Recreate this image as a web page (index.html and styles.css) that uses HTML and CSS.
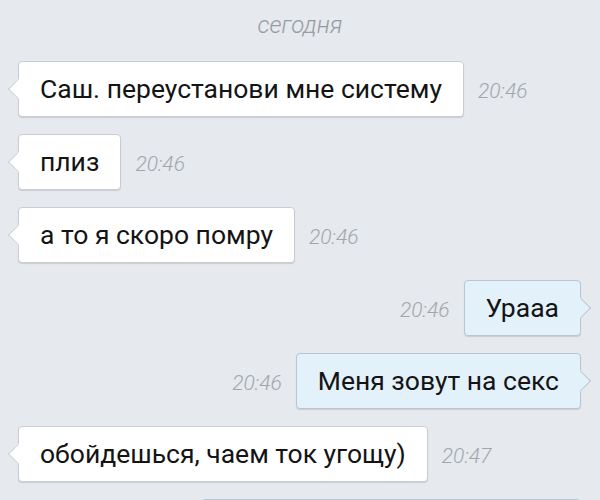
FILE: index.html
```html
<!DOCTYPE html>
<html lang="ru">
<head>
<meta charset="utf-8">
<link rel="stylesheet" href="styles.css">
</head>
<body>
<div class="chat">
  <div class="day">сегодня</div>
  <div class="row in"><div class="bubble">Саш. переустанови мне систему</div><span class="time">20:46</span></div>
  <div class="row in"><div class="bubble">плиз</div><span class="time">20:46</span></div>
  <div class="row in"><div class="bubble">а то я скоро помру</div><span class="time">20:46</span></div>
  <div class="row out"><span class="time">20:46</span><div class="bubble">Урааа</div></div>
  <div class="row out"><span class="time">20:46</span><div class="bubble">Меня зовут на секс</div></div>
  <div class="row in"><div class="bubble">обойдешься, чаем ток угощу)</div><span class="time">20:47</span></div>
  <div class="row out"><div class="bubble wide">&nbsp;</div></div>
</div>
</body>
</html>
```
FILE: styles.css
```css
html, body {
  margin: 0;
  padding: 0;
  background: #e6e9ed;
  overflow: hidden;
}
body {
  width: 600px;
  height: 500px;
  font-family: Roboto, "Liberation Sans", sans-serif;
}
.chat {
  display: flex;
  flex-direction: column;
  gap: 17px;
  padding-top: 11px;
}
.day {
  text-align: center;
  font-size: 24px;
  line-height: 28px;
  font-style: italic;
  font-weight: 300;
  color: #979ca3;
  margin-bottom: 5px;
}
.row {
  display: flex;
  align-items: center;
  gap: 14px;
}
.row.in {
  justify-content: flex-start;
  padding-left: 18px;
}
.row.out {
  justify-content: flex-end;
  padding-right: 19px;
}
.bubble {
  position: relative;
  background: #ffffff;
  border: 1px solid #c9cdd3;
  border-radius: 4px;
  box-shadow: 0 1px 1px rgba(0, 0, 0, 0.12);
  padding: 12px 21px;
  font-size: 26.5px;
  line-height: 30px;
  color: #141414;
  white-space: nowrap;
}
.bubble::before {
  content: "";
  position: absolute;
  top: 50%;
  width: 13px;
  height: 13px;
  background: inherit;
  border: 1px solid #c9cdd3;
  transform: translateY(-50%) rotate(45deg);
}
.in .bubble::before {
  left: -8px;
  border-top-color: transparent;
  border-right-color: transparent;
}
.out .bubble {
  background: #e3f1fb;
  border-color: #b9c6d2;
}
.out .bubble::before {
  right: -8px;
  border-color: #b9c6d2;
  border-bottom-color: transparent;
  border-left-color: transparent;
}
.bubble.wide {
  width: 336px;
}
.time {
  font-size: 21px;
  font-style: italic;
  font-weight: 300;
  color: #a2a6ac;
  padding-top: 4px;
}
```
